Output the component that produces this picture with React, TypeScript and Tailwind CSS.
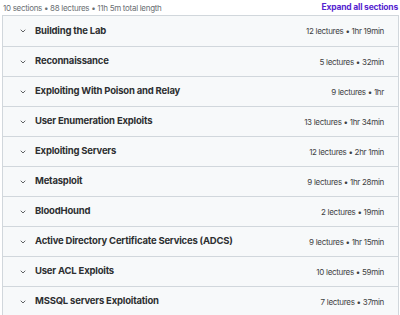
import { ChevronDown } from 'lucide-react';

const sections = [
    { title: 'Building the Lab', meta: '12 lectures • 1hr 19min' },
    { title: 'Reconnaissance', meta: '5 lectures • 32min' },
    { title: 'Exploiting With Poison and Relay', meta: '9 lectures • 1hr' },
    { title: 'User Enumeration Exploits', meta: '13 lectures • 1hr 34min' },
    { title: 'Exploiting Servers', meta: '12 lectures • 2hr 1min' },
    { title: 'Metasploit', meta: '9 lectures • 1hr 28min' },
    { title: 'BloodHound', meta: '2 lectures • 19min' },
    { title: 'Active Directory Certificate Services (ADCS)', meta: '9 lectures • 1hr 15min' },
    { title: 'User ACL Exploits', meta: '10 lectures • 59min' },
    { title: 'MSSQL servers Exploitation', meta: '7 lectures • 37min' },
];

export default function App() {
    return (
        <div className="h-[315px] w-[400px] overflow-hidden bg-white pl-[2px] pr-px font-['Inter',sans-serif] text-[#2d2f31]">
            <div className="flex h-[15px] items-center justify-between pl-px pr-px">
                <span className="text-[8px] tracking-[-0.3px] text-[#6a6f73]">
                    10 sections • 88 lectures • 11h 5m total length
                </span>
                <span className="text-[8.5px] font-bold tracking-[-0.2px] text-[#5624d0]">
                    Expand all sections
                </span>
            </div>
            <div className="border border-[#d1d7dc]">
                {sections.map((s, i) => (
                    <div
                        key={s.title}
                        className={`flex h-[30px] items-center bg-[#f7f9fa] pl-[16px] pr-[14px] ${
                            i > 0 ? 'border-t border-[#d1d7dc]' : ''
                        }`}
                    >
                        <ChevronDown className="h-[8px] w-[8px] shrink-0" strokeWidth={2.25} />
                        <span className="ml-[8px] flex-1 truncate text-[9.5px] font-bold tracking-[-0.2px]">
                            {s.title}
                        </span>
                        <span className="ml-2 shrink-0 text-[8px] tracking-[-0.3px] text-[#3e4143]">
                            {s.meta}
                        </span>
                    </div>
                ))}
            </div>
        </div>
    );
}
